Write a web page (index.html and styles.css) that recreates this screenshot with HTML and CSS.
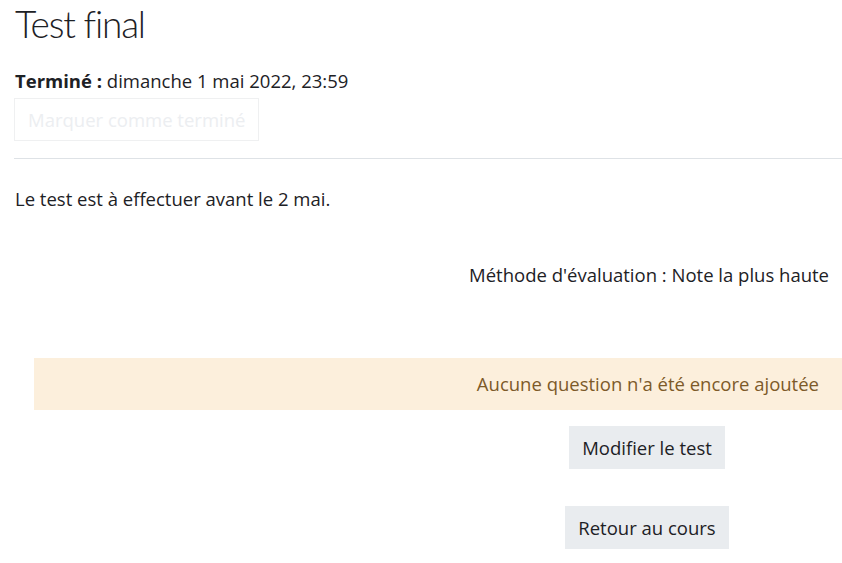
FILE: index.html
```html
<!DOCTYPE html>
<html lang="fr">
<head>
    <meta charset="UTF-8">
    <title>Test final</title>
    <link rel="stylesheet" href="styles.css">
</head>
<body>
<div class="page">
    <h2 class="title">Test final</h2>

    <div class="dates">
        <strong>Terminé :</strong> dimanche 1 mai 2022, 23:59
    </div>
    <div class="completion">
        <button class="btn-done" disabled>Marquer comme terminé</button>
    </div>

    <hr class="sep">

    <div class="intro">Le test est à effectuer avant le 2 mai.</div>

    <div class="quizinfo">Méthode d'évaluation : Note la plus haute</div>

    <div class="alert">Aucune question n'a été encore ajoutée</div>

    <div class="actions">
        <button class="btn">Modifier le test</button>
        <button class="btn btn-back">Retour au cours</button>
    </div>
</div>
</body>
</html>
```

FILE: styles.css
```css
* {
    box-sizing: border-box;
}

body {
    margin: 0;
    font-family: "Segoe UI", "Open Sans", "Liberation Sans", sans-serif;
    font-size: 18.5px;
    line-height: 27px;
    color: #1d2125;
    background: #fff;
    overflow: hidden;
}

.page {
    display: flex;
    flex-direction: column;
    padding-left: 14px;
}

.title {
    margin: 0;
    padding-left: 1px;
    font-family: "Segoe UI", Lato, sans-serif;
    font-size: 37px;
    font-weight: 300;
    letter-spacing: -1.2px;
    line-height: 48px;
}

.dates {
    margin-top: 19px;
    padding-left: 1px;
}

.dates strong {
    font-weight: 700;
}

.completion {
    margin-top: 4px;
}

.btn-done {
    height: 43px;
    padding: 0 13px;
    font-family: inherit;
    font-size: 18.5px;
    color: #eceef1;
    background: #fff;
    border: 1px solid #eff0f1;
    border-radius: 0;
}

.sep {
    width: 100%;
    margin: 17px 0 0;
    border: 0;
    border-top: 1px solid #dee2e6;
}

.intro {
    margin-top: 26px;
    padding-left: 1px;
}

.quizinfo {
    margin-top: 49px;
    padding-right: 13px;
    text-align: right;
}

.alert {
    margin: 70px 0 0 20px;
    padding: 12px 23px 13px;
    text-align: right;
    color: #7d5a29;
    background: #fcefdc;
}

.actions {
    display: flex;
    flex-direction: column;
    align-items: center;
    gap: 37px;
    margin: 16px 0 0 438px;
}

.btn {
    height: 43px;
    padding: 0 13px;
    font-family: inherit;
    font-size: 18.5px;
    color: #1d2125;
    background: #e9ecef;
    border: 0;
    border-radius: 0;
}
```
